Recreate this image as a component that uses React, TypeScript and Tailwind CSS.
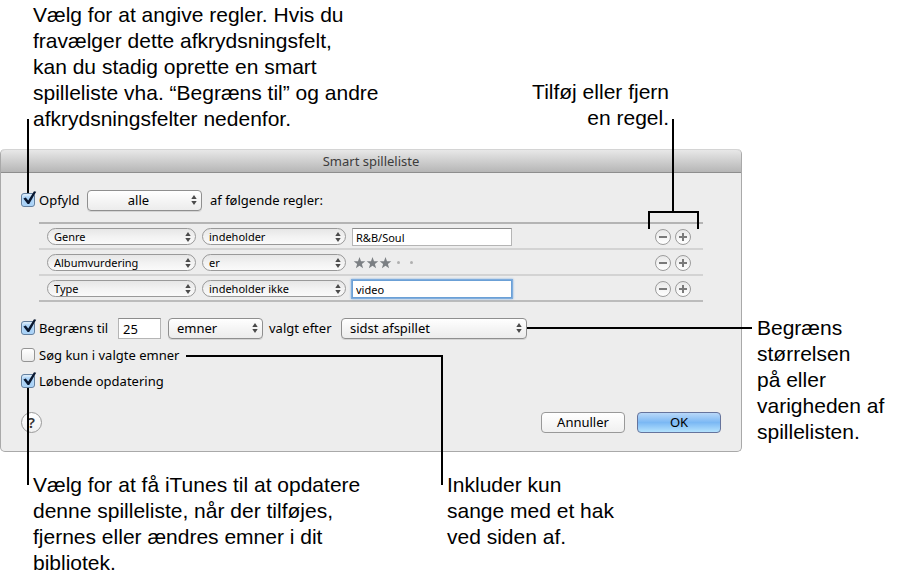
import type { InputHTMLAttributes, ReactNode } from "react";

function Arrows() {
  return (
    <svg viewBox="0 0 6 10" className="pointer-events-none absolute top-1/2 right-[5px] h-[10px] w-[6px] -translate-y-1/2 fill-[#4a4a4a]" aria-hidden="true">
      <path d="M3 0 5.7 4H0.3zM3 10 5.7 6H0.3z" />
    </svg>
  );
}

function Popup({ label, value, width, center }: { label: string; value: string; width: string; center?: boolean }) {
  return (
    <span className={`relative flex shrink-0 ${width}`}>
      <select
        aria-label={label}
        className={`h-[21px] w-full appearance-none rounded-[4px] border border-[#8f8f8f] bg-linear-to-b from-white via-[#f5f5f5] to-[#ececec] pr-[20px] pl-[8px] text-[13px] leading-[18px] text-black shadow-[0_1px_0_#d4d4d4] ${center ? "text-center" : ""}`}
      >
        <option>{value}</option>
      </select>
      <Arrows />
    </span>
  );
}

function RulePopup({ label, value, width }: { label: string; value: string; width: string }) {
  return (
    <span className={`relative flex shrink-0 ${width}`}>
      <select
        aria-label={label}
        className="h-[17px] w-full appearance-none rounded-full border border-[#999] bg-linear-to-b from-[#e6e6e6] via-[#f2f2f2] to-[#fafafa] pr-[16px] pl-[6px] text-[11px] leading-[14px] text-black"
      >
        <option>{value}</option>
      </select>
      <Arrows />
    </span>
  );
}

function Checkbox({ children, ...props }: InputHTMLAttributes<HTMLInputElement> & { children?: ReactNode }) {
  return (
    <span className="relative flex size-[14px] shrink-0">
      <input
        type="checkbox"
        {...props}
        className="peer size-[14px] appearance-none rounded-[3px] border border-[#949494] bg-linear-to-b from-white to-[#ebebeb] checked:border-[#64809f] checked:bg-none checked:bg-[#a9d2f7] checked:shadow-[inset_0_2px_2px_#dcecfa]"
      />
      <svg viewBox="0 0 16 16" className="pointer-events-none absolute bottom-0 left-0 hidden size-[16px] fill-[#0a1830] peer-checked:block" aria-hidden="true">
        <path d="M2.4 7.6 4.8 6.4 7.2 9.6 13 0.2 15.2 0.8 8.2 13H6.6z" />
      </svg>
      {children}
    </span>
  );
}

function RoundButton({ label, plus }: { label: string; plus?: boolean }) {
  return (
    <button
      type="button"
      aria-label={label}
      className="flex size-[16px] items-center justify-center rounded-full border border-[#9c9c9c] bg-linear-to-b from-[#e9e9e9] to-white"
    >
      <svg viewBox="0 0 8 8" className="size-[8px] fill-[#7a7a7a]" aria-hidden="true">
        <path d={plus ? "M0 3h3V0h2v3h3v2H5v3H3V5H0z" : "M0 3h8v2H0z"} />
      </svg>
    </button>
  );
}

function Rating() {
  return (
    <span role="img" aria-label="3 af 5 stjerner" className="flex">
      <svg viewBox="0 0 65 12" className="h-[12px] w-[65px]" aria-hidden="true">
        {[0, 13, 26].map((x) => (
          <path key={x} transform={`translate(${x} 0)`} fill="#7c8084" d="M7.5 0 9 4.2 13.3 4.3 9.9 7 11.1 11.2 7.5 8.7 3.9 11.2 5.1 7 1.7 4.3 6 4.2z" />
        ))}
        <circle cx="46.5" cy="5.5" r="1.5" fill="#b0b0b0" />
        <circle cx="59.5" cy="5.5" r="1.5" fill="#b0b0b0" />
      </svg>
    </span>
  );
}

function Rule({ field, condition, children }: { field: string; condition: string; children: ReactNode }) {
  return (
    <li className="flex h-[26px] items-center border-b-2 border-[#d3d3d3] pt-px pr-[12px] pl-[8px] last:border-[#bcbcbc]">
      <RulePopup label="Felt" value={field} width="w-[149px]" />
      <span className="w-[6px] shrink-0" />
      <RulePopup label="Betingelse" value={condition} width="w-[144px]" />
      <span className="w-[6px] shrink-0" />
      {children}
      <span className="ml-auto flex gap-1">
        <RoundButton label="Fjern regel" />
        <RoundButton label="Tilføj regel" plus />
      </span>
    </li>
  );
}

const pushButton = "h-[21px] w-[84px] rounded-[4px] border text-[13px] leading-[18px]";

export default function App() {
  return (
    <main className="grid min-h-screen grid-cols-[minmax(0,1fr)_158px] content-start bg-white font-['Liberation_Sans',Arial,sans-serif] text-[21px] leading-[26px] text-black">
      <div className="flex h-[149px] items-start justify-between pt-[2px] pr-[73px] pl-[33px]">
        <p>
          Vælg for at angive regler. Hvis du
          <br />
          fravælger dette afkrydsningsfelt,
          <br />
          kan du stadig oprette en smart
          <br />
          spilleliste vha. “Begræns til” og andre
          <br />
          afkrydsningsfelter nedenfor.
        </p>
        <p className="pt-[77px] text-right">
          Tilføj eller fjern
          <br />
          en regel.
        </p>
      </div>

      <section
        aria-labelledby="title"
        className="col-start-1 rounded-t-[5px] rounded-b-[5px] border border-t-0 border-[#a9a9a9] bg-[#ededed] font-['Noto_Sans','Open_Sans',sans-serif] text-[13px] leading-[18px]"
      >
        <header className="h-[24px] rounded-t-[5px] border-t border-b border-t-[#d4d4d4] border-b-[#8e8e8e] bg-linear-to-b from-[#e8e8e8] to-[#b6b6b6] text-center">
          <h1 id="title" className="leading-[23px] text-[#3c3c3c]">Smart spilleliste</h1>
        </header>

        <form className="pt-[16px] pb-[18px] pl-[20px]" onSubmit={(e) => e.preventDefault()}>
          <div className="flex h-[22px] items-center">
            <label className="flex w-[66px] shrink-0 items-center gap-1">
              <Checkbox defaultChecked>
                <span className="absolute bottom-full left-[6px] h-[74px] w-[2px] bg-black" />
              </Checkbox>
              Opfyld
            </label>
            <Popup label="Opfyld" value="alle" width="w-[115px]" center />
            <span className="pl-2">af følgende regler:</span>
          </div>

          <div className="relative mt-[11px] mr-[38px] ml-[18px]">
            <ul className="border-t-2 border-[#b4b4b4]">
              <Rule field="Genre" condition="indeholder">
                <input aria-label="Genre" defaultValue="R&B/Soul" className="h-[18px] w-[160px] border border-[#b5b5b5] border-t-[#8c8c8c] bg-white px-[3px] pt-[2px] text-[11px] leading-[14px]" />
              </Rule>
              <Rule field="Albumvurdering" condition="er">
                <Rating />
              </Rule>
              <Rule field="Type" condition="indeholder ikke">
                <input aria-label="Type" defaultValue="video" className="h-[18px] w-[160px] border border-[#6ba0d6] bg-white px-[3px] pt-[2px] text-[11px] leading-[14px] shadow-[0_0_0_1px_#7fadde,0_0_2px_1px_#7fadde] outline-none" />
              </Rule>
            </ul>
            <span className="absolute top-[-11px] right-[4px] h-[18px] w-[51px] border-x-2 border-t-2 border-black">
              <span className="absolute bottom-full left-[22px] h-[94px] w-[2px] bg-black" />
            </span>
          </div>

          <div className="mt-[15px] flex h-[22px] items-center">
            <label className="flex w-[97px] shrink-0 items-center gap-1">
              <Checkbox defaultChecked />
              Begræns til
            </label>
            <input aria-label="Antal" defaultValue="25" className="h-[21px] w-[43px] shrink-0 border border-[#b5b5b5] border-t-[#8c8c8c] bg-white px-[4px] pt-[2px]" />
            <span className="w-[7px] shrink-0" />
            <Popup label="Enhed" value="emner" width="w-[95px]" />
            <span className="w-[78px] shrink-0 pl-[6px]">valgt efter</span>
            <Popup label="Valgt efter" value="sidst afspillet" width="w-[186px]" />
            <span className="relative -mr-[11px] h-[2px] flex-1 bg-black" />
          </div>

          <div className="relative mt-[3px] flex h-[26px] w-[165px] items-center">
            <label className="flex items-center gap-1 whitespace-nowrap">
              <Checkbox />
              Søg kun i valgte emner
            </label>
            <span className="pointer-events-none absolute top-1/2 left-full h-[130px] w-[257px] border-t-2 border-r-2 border-black" />
          </div>

          <div className="flex h-[26px] items-center">
            <label className="flex items-center gap-1">
              <Checkbox defaultChecked>
                <span className="absolute top-full left-[6px] z-10 h-[97px] w-[2px] bg-black" />
              </Checkbox>
              Løbende opdatering
            </label>
          </div>

          <div className="mt-[17px] flex h-[22px] items-center gap-3 pr-[20px]">
            <button type="button" aria-label="Hjælp" className="mr-auto size-[21px] rounded-full border border-[#999] bg-linear-to-b from-white to-[#f0f0f0] text-[15px] leading-[18px] font-semibold text-[#333]">
              ?
            </button>
            <button type="button" className={`${pushButton} border-[#999] bg-linear-to-b from-white to-[#f0f0f0]`}>
              Annuller
            </button>
            <button type="submit" className={`${pushButton} border-[#66749c] bg-linear-to-b from-[#b9d8f8] via-[#7bb8f4] to-[#b4e2fd]`}>
              OK
            </button>
          </div>
        </form>
      </section>

      <p className="pt-[166px] pl-[15px]">
        Begræns
        <br />
        størrelsen
        <br />
        på eller
        <br />
        varigheden af
        <br />
        spillelisten.
      </p>

      <div className="col-start-1 flex pt-[20px] pl-[33px]">
        <p className="w-[414px] shrink-0">
          Vælg for at få iTunes til at opdatere
          <br />
          denne spilleliste, når der tilføjes,
          <br />
          fjernes eller ændres emner i dit
          <br />
          bibliotek.
        </p>
        <p className="shrink-0">
          Inkluder kun
          <br />
          sange med et hak
          <br />
          ved siden af.
        </p>
      </div>
    </main>
  );
}
